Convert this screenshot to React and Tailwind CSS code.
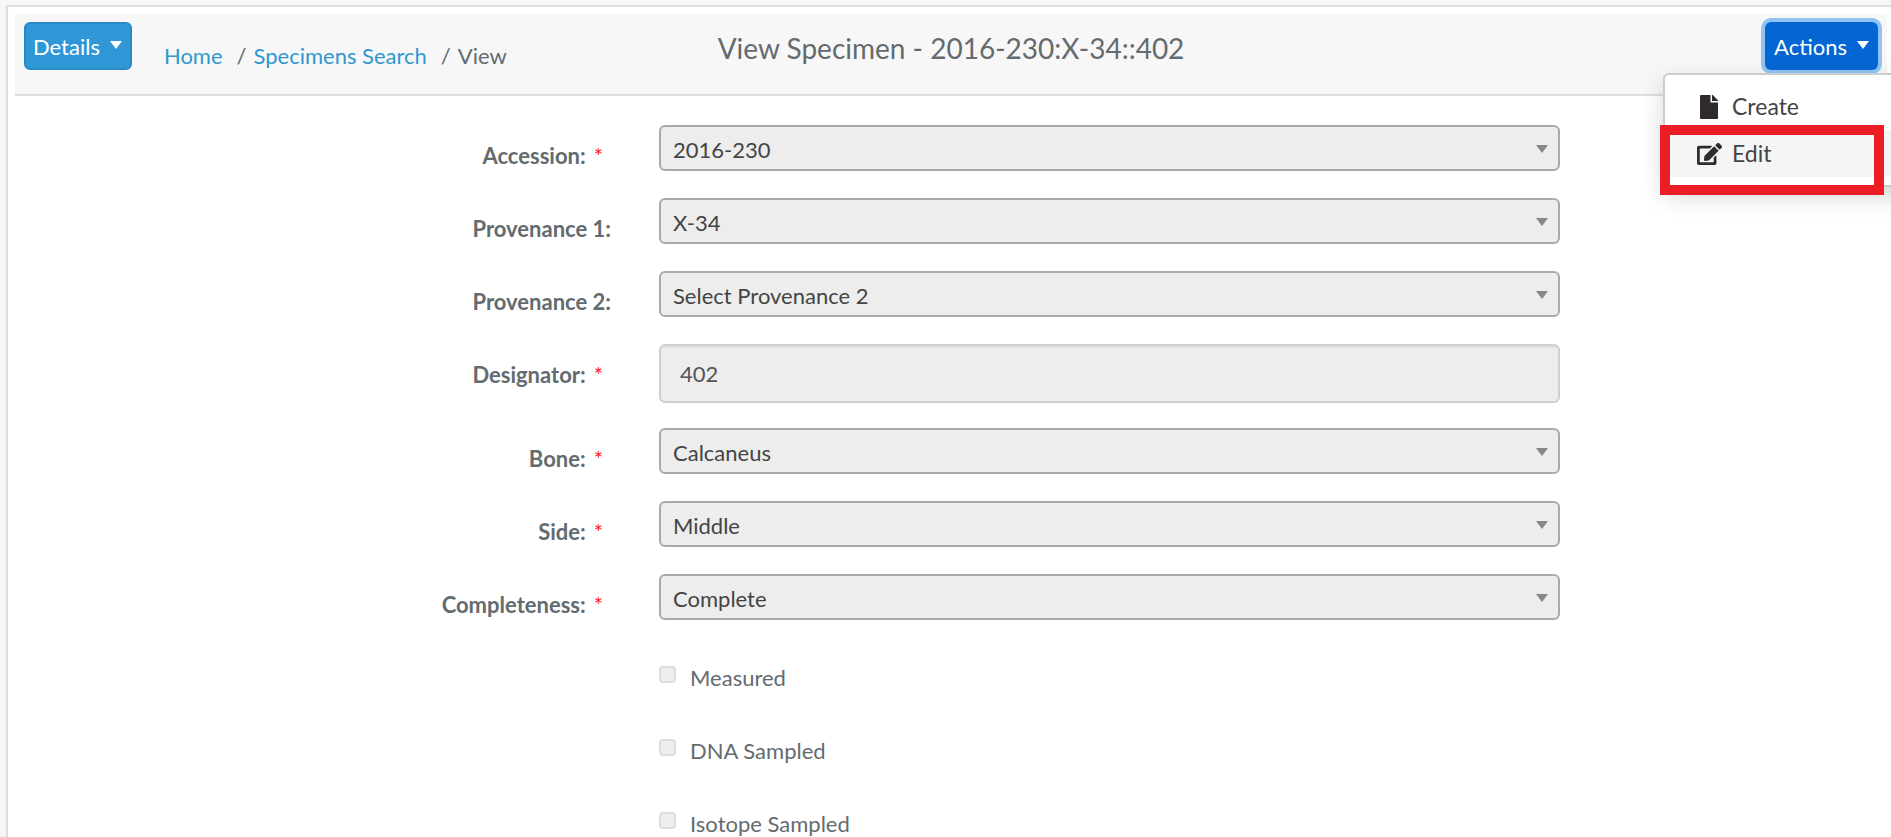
import React from "react";
import { FaEdit, FaFile } from "react-icons/fa";

const fields = [
  { id: "accession", label: "Accession:", value: "2016-230", required: true },
  { id: "provenance1", label: "Provenance 1:", value: "X-34" },
  { id: "provenance2", label: "Provenance 2:", value: "Select Provenance 2" },
  { id: "designator", label: "Designator:", value: "402", required: true, text: true },
  { id: "bone", label: "Bone:", value: "Calcaneus", required: true },
  { id: "side", label: "Side:", value: "Middle", required: true },
  { id: "completeness", label: "Completeness:", value: "Complete", required: true },
];

const checks = [
  { id: "measured", label: "Measured" },
  { id: "dna", label: "DNA Sampled" },
  { id: "isotope", label: "Isotope Sampled" },
];

function Caret({ className }) {
  return (
    <svg viewBox="0 0 12 8" className={className} aria-hidden="true">
      <path d="M0 0h12L6 8z" fill="currentColor" />
    </svg>
  );
}

function Field({ field }) {
  return (
    <div className={field.text ? "grid h-[84px] grid-cols-12 items-start" : "grid h-[73px] grid-cols-12 items-start"}>
      <label htmlFor={field.id} className="col-span-4 flex justify-end pr-7 pt-4 font-bold leading-[30px]">
        {field.label}
        {field.required && <span className="pl-2 pr-2 font-normal text-[#ff1a1a]">*</span>}
      </label>
      <div className="relative col-span-6 pl-5 pr-[15px]">
        {field.text ? (
          <input
            id={field.id}
            type="text"
            disabled
            defaultValue={field.value}
            className="h-[59px] w-full rounded-md border-2 border-[#ccd0d0] bg-[#ededed] px-[19px] text-[#555] shadow-[inset_0_2px_1px_rgba(0,0,0,0.05)]"
          />
        ) : (
          <>
            <select
              id={field.id}
              disabled
              className="h-[46px] w-full appearance-none rounded-md border-2 border-[#aaa] bg-[#ededed] px-3 pt-0.5 text-[#444] disabled:opacity-100"
            >
              <option>{field.value}</option>
            </select>
            <Caret className="pointer-events-none absolute right-[27px] top-5 h-2 w-3 text-[#888]" />
          </>
        )}
      </div>
    </div>
  );
}

export default function App() {
  return (
    <div className="h-screen overflow-hidden bg-[#f7f7f7] pl-[6px] pt-[5px] font-['Lato',sans-serif] text-[22px] text-[#636b6f]">
      <main className="min-h-full border-l-2 border-t-2 border-[#ddd] bg-white pl-[7px] pr-1 pt-[7px]">
        <header className="grid h-[82px] grid-cols-[1fr_auto_1fr] items-start border-b-2 border-[#ddd] bg-[#f7f7f7] px-[9px] pt-2">
          <div className="flex items-start">
            <button
              type="button"
              className="flex h-12 items-center gap-[10px] rounded-md border-2 border-[#2a88c8] bg-[#3097d7] pl-[7px] pr-2 text-white"
            >
              Details
              <Caret className="-mt-0.5 h-2 w-3" />
            </button>
            <nav aria-label="Breadcrumb" className="pl-8 pt-5 leading-7">
              <ol className="flex">
                <li>
                  <a href="#home" className="text-[#3097d1]">Home</a>
                </li>
                <li className="pl-[14px]">
                  <span className="pr-[7px]">/</span>
                  <a href="#search" className="text-[#3097d1]">Specimens Search</a>
                </li>
                <li className="pl-[14px]">
                  <span className="pr-[7px]">/</span>View
                </li>
              </ol>
            </nav>
          </div>
          <h1 className="pt-2 text-[28px] leading-9">View Specimen - 2016-230:X-34::402</h1>
          <div className="relative justify-self-end">
            <button
              type="button"
              aria-expanded="true"
              className="flex h-12 items-center gap-[10px] rounded-md bg-[#0366d2] px-[9px] text-white ring-4 ring-[#90c4f2]"
            >
              Actions
              <Caret className="-mt-0.5 h-2 w-3" />
            </button>
            <ul className="absolute left-[-102px] top-[51px] z-10 w-[260px] rounded-md border-2 border-[#ccc] bg-white py-2 text-[23px] text-[#444] shadow-[0_9px_24px_rgba(0,0,0,0.16)]">
              <li>
                <a href="#create" className="flex h-[47px] items-center pl-8">
                  <span className="flex w-[35px] justify-start pl-[3px]">
                    <FaFile className="h-6 w-[18px] text-[#2f2b2c]" />
                  </span>
                  Create
                </a>
              </li>
              <li>
                <a href="#edit" className="flex h-[47px] items-center bg-[#f5f5f5] pl-8">
                  <span className="flex w-[35px] justify-start">
                    <FaEdit className="h-6 w-[25px] text-[#2f2b2c]" />
                  </span>
                  Edit
                </a>
              </li>
            </ul>
            <div className="pointer-events-none absolute left-[-105px] top-[103px] z-20 h-[70px] w-[224px] border-[10px] border-[#ee1c25]" />
          </div>
        </header>
        <form className="pt-[29px]">
          {fields.map((f) => (
            <Field key={f.id} field={f} />
          ))}
          {checks.map((c) => (
            <div key={c.id} className="grid h-[73px] grid-cols-12 items-start">
              <div className="col-span-6 col-start-5 flex items-start pl-5 pt-4">
                <input
                  id={c.id}
                  type="checkbox"
                  disabled
                  className="mt-[3px] size-[17px] appearance-none rounded-[4px] border-2 border-[#ddd] bg-[#eee]"
                />
                <label htmlFor={c.id} className="pl-[14px] leading-[30px]">{c.label}</label>
              </div>
            </div>
          ))}
        </form>
      </main>
    </div>
  );
}
